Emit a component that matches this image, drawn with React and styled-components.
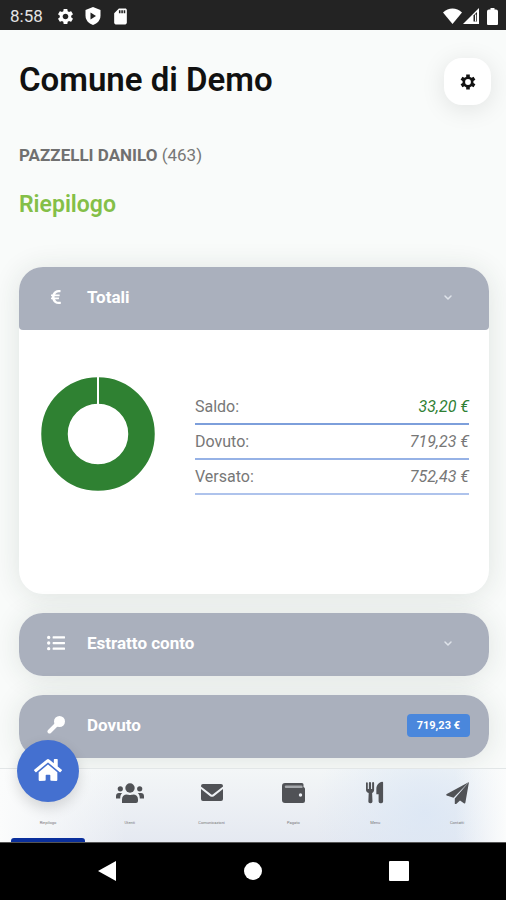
import React from 'react';
import styled, { createGlobalStyle } from 'styled-components';
import {
  FaHome, FaEuroSign, FaListUl,
} from 'react-icons/fa';
import { MdSettings, MdSdCard } from 'react-icons/md';

const GlobalStyle = createGlobalStyle`
  * {
    box-sizing: border-box;
  }

  body {
    margin: 0;
    background: #f9fbfa;
    color: #707070;
    font-family: Roboto, sans-serif;
  }

  button {
    border: 0;
    padding: 0;
    font-family: inherit;
    cursor: pointer;
  }
`;

const Screen = styled.div`
  display: flex;
  flex-direction: column;
  height: 100vh;
  overflow: hidden;
`;

const StatusBar = styled.div`
  display: flex;
  flex: none;
  justify-content: space-between;
  align-items: center;
  height: 30px;
  padding: 2px 8px 0 10px;
  background: #232323;
  color: #fff;
  font-size: 17px;
`;

const StatusGroup = styled.div`
  display: flex;
  align-items: center;
  gap: ${({ $gap }) => $gap}px;
`;

const Clock = styled.span`
  margin-right: 3px;
  color: #e4e4e4;
`;

const Content = styled.main`
  flex: 1;
  min-height: 0;
  overflow: hidden;
  padding: 28px 17px 0 19px;
`;

const Header = styled.header`
  display: flex;
  justify-content: space-between;
  align-items: flex-start;
`;

const Title = styled.h1`
  margin: 0;
  color: #111;
  font-size: 33px;
  font-weight: 600;
  line-height: 44px;
`;

const SettingsButton = styled.button`
  display: flex;
  justify-content: center;
  align-items: center;
  width: 47px;
  height: 47px;
  margin-right: -2px;
  border-radius: 18px;
  background: #fff;
  color: #111;
  box-shadow: 0 4px 25px rgba(0, 0, 0, 0.1);
`;

const UserName = styled.p`
  margin: 40px 0 0;
  color: #777;
  font-size: 17px;
  line-height: 20px;

  strong {
    color: #707070;
    font-weight: 700;
  }
`;

const SectionTitle = styled.h2`
  margin: 24px 0 0;
  color: #84bf48;
  font-size: 23px;
  font-weight: 600;
  line-height: 32px;
`;

const Accordion = styled.div`
  display: flex;
  flex-direction: column;
  gap: 19px;
  margin-top: 46px;
`;

const Card = styled.section`
  border-radius: 24px;
  background: #fff;
  box-shadow: 0 2px 28px rgba(30, 60, 40, 0.12);
`;

const CardHeader = styled.button`
  display: flex;
  align-items: center;
  width: 100%;
  height: 63px;
  padding: 0 ${({ $badge }) => ($badge ? 19 : 35)}px 3px 24px;
  border-radius: ${({ $open }) => ($open ? '24px 24px 4px 4px' : '24px')};
  background: #aab0bd;
  color: #fff;
  font-size: 17px;
  font-weight: 700;
  text-align: left;
`;

const CardIcon = styled.span`
  display: flex;
  justify-content: center;
  width: 26px;
  margin-right: 18px;
`;

const CardLabel = styled.span`
  flex: 1;
`;

const Badge = styled.span`
  padding: 0 10px;
  border-radius: 4px;
  background: #4a87dc;
  font-size: 11px;
  font-weight: 700;
  line-height: 23px;
`;

const CardBody = styled.div`
  display: flex;
  align-items: flex-start;
  gap: 40px;
  height: 264px;
  padding: 47px 20px 0 22px;
`;

const Totals = styled.table`
  flex: 1;
  margin-top: 12px;
  border-collapse: collapse;
  font-size: 16px;

  th {
    padding: 0;
    color: #777;
    font-weight: 400;
    text-align: left;
  }

  td {
    padding: 0;
    font-style: italic;
    text-align: right;
  }
`;

const TotalRow = styled.tr`
  height: 35px;
  border-bottom: 2px solid ${({ $line }) => $line};

  td {
    color: ${({ $positive }) => ($positive ? '#2f8034' : '#777')};
  }
`;

const TabBar = styled.nav`
  display: grid;
  flex: none;
  grid-template-columns: repeat(6, 1fr);
  height: 74px;
  padding: 0 8px 0 7px;
  border-top: 1px solid #e2e6e7;
  background:
    linear-gradient(90deg, #fbfcfc 0%, rgba(251, 252, 252, 0) 25%, rgba(251, 252, 252, 0) 90%, #fbfcfc 100%),
    radial-gradient(circle at 84% 60%, rgba(218, 230, 245, 0.8), rgba(218, 230, 245, 0) 110px),
    linear-gradient(#f3f6f7, #e5e9f1);
`;

const Tab = styled.a`
  display: flex;
  position: relative;
  flex-direction: column;
  align-items: center;
  padding-top: 11px;
  color: #505256;
  text-decoration: none;
`;

const TabIcon = styled.span`
  display: flex;
  justify-content: center;
  align-items: center;
  height: 25px;
`;

const TabLabel = styled.span`
  margin-top: 16px;
  color: #777;
  font-size: 4px;
  line-height: 4px;
`;

const HomeBubble = styled.span`
  display: flex;
  position: absolute;
  top: -29px;
  justify-content: center;
  align-items: center;
  width: 62px;
  height: 62px;
  padding-bottom: 3px;
  border-radius: 50%;
  background: #4470d0;
  color: #fff;
  box-shadow: 0 6px 14px rgba(0, 0, 0, 0.14);
`;

const ActiveLine = styled.span`
  position: absolute;
  right: 4px;
  bottom: 0;
  left: 4px;
  height: 4px;
  border-radius: 3px 3px 0 0;
  background: #0a2f9c;
`;

const SystemBar = styled.div`
  display: grid;
  flex: none;
  grid-template-columns: repeat(3, 146px);
  justify-content: center;
  height: 58px;
  border-top: 1px solid #555;
  background: #000;
`;

const SystemButton = styled.button`
  display: flex;
  justify-content: center;
  align-items: center;
  padding-bottom: 1px;
  background: none;
`;

function ShieldIcon() {
  return (
    <svg width="16" height="18" viewBox="0 0 16 18">
      <path d="M8 0l7.500 3v5.500c0 4.500-3 8-7.500 9.500C3.500 16.500.5 13 .5 8.500V3z" fill="#fff" />
      <path d="M5.500 5.500v7L11 9z" fill="#232323" />
    </svg>
  );
}

function WifiIcon() {
  return (
    <svg width="19" height="16" viewBox="0 0 19 16">
      <path d="M0 4.500C5.500-1 13.500-1 19 4.500L9.500 16z" fill="#fff" />
    </svg>
  );
}

function SignalIcon() {
  return (
    <svg width="16" height="16" viewBox="0 0 16 16">
      <path d="M0 16L16 0v16z" fill="#fff" />
      <path d="M10.500 7.500L14 4v9.500h-3.500z" fill="#232323" />
      <path d="M12 6.500h1.200v7H12z" fill="#fff" />
    </svg>
  );
}

function BatteryIcon() {
  return (
    <svg width="11" height="17" viewBox="0 0 11 17">
      <path d="M3.500 0h4v1.500H9a2 2 0 012 2V16a1 1 0 01-1 1H1a1 1 0 01-1-1V3.500a2 2 0 012-2h1.500z" fill="#fff" />
    </svg>
  );
}

function GearIcon() {
  return (
    <svg width="16" height="16" viewBox="0 0 16 16" fill="none" stroke="currentColor">
      <circle cx="8" cy="8" r="4.200" strokeWidth="2.600" />
      {[0, 60, 120].map((angle) => (
        <path
          key={angle}
          d="M8 .5v2.800M8 12.700v2.800"
          strokeWidth="3.600"
          transform={`rotate(${angle} 8 8)`}
        />
      ))}
    </svg>
  );
}

function KeyIcon() {
  return (
    <svg width="18" height="18" viewBox="0 0 18 18">
      <circle cx="12.500" cy="5.500" r="5.500" fill="#fff" />
      <path d="M9 9l-6.500 6.500" stroke="#fff" strokeWidth="4" strokeLinecap="round" />
    </svg>
  );
}

function ChevronIcon() {
  return (
    <svg width="12" height="12" viewBox="0 0 12 12" fill="none" stroke="#dfe3ea" strokeWidth="1.500">
      <path d="M3 5l3 3 3-3" strokeLinecap="round" strokeLinejoin="round" />
    </svg>
  );
}

function PeopleIcon() {
  return (
    <svg width="28" height="20" viewBox="0 0 28 20" fill="currentColor">
      <circle cx="14" cy="5" r="4.700" />
      <path d="M6 20v-3.500c0-3.200 2-5 5-5 1.200.6 4.800.6 6 0 3 0 5 1.800 5 5V18a2 2 0 01-2 2z" />
      <circle cx="4.300" cy="5.800" r="2.600" />
      <circle cx="23.700" cy="5.800" r="2.600" />
      <path d="M0 15.500v-2.200C0 11 1.200 10 3 10h3.200c-1.400 1.400-2 3-2 5.500z" />
      <path d="M28 15.500v-2.200c0-2.300-1.200-3.300-3-3.300h-3.200c1.400 1.400 2 3 2 5.500z" />
    </svg>
  );
}

function EnvelopeIcon() {
  return (
    <svg width="22" height="17" viewBox="0 0 22 17" fill="currentColor">
      <path d="M0 2.500V2a2 2 0 012-2h18a2 2 0 012 2v.5l-9.700 7.600a2 2 0 01-2.600 0z" />
      <path d="M0 5l8.800 6.900a3.500 3.500 0 004.400 0L22 5v10a2 2 0 01-2 2H2a2 2 0 01-2-2z" />
    </svg>
  );
}

function WalletIcon() {
  return (
    <svg width="23" height="20" viewBox="0 0 23 20">
      <path d="M3 0h17a1.500 1.500 0 011.500 1.500V4A2 2 0 0123 6v12a2 2 0 01-2 2H3a3 3 0 01-3-3V3a3 3 0 013-3z" fill="currentColor" />
      <path d="M4 2.500h15.500a1 1 0 011 1V5H4a1.200 1.200 0 010-2.500z" fill="#a5a8ac" />
      <circle cx="18.500" cy="12" r="1.700" fill="#eceff4" />
    </svg>
  );
}

function CutleryIcon() {
  return (
    <svg width="18" height="23" viewBox="0 0 20 24" fill="currentColor">
      <path d="M0 1.500a1 1 0 012 0V8h1.200V1.500a1.200 1.200 0 012.400 0V8h1.200V1.500a1 1 0 012.200 0V9c0 1.800-.8 3-2.200 3.600L7.200 22a2 2 0 01-2 2H4.600a2 2 0 01-2-2L3 12.600C1 12 0 10.800 0 9z" />
      <path d="M19 1v21a2 2 0 01-2 2h-1a2 2 0 01-2-2v-8h-2.500V8C11.500 3.500 14.500.500 18 0a1 1 0 011 1z" />
    </svg>
  );
}

function PlaneIcon() {
  return (
    <svg width="23" height="22" viewBox="0 0 23 22" fill="currentColor">
      <path d="M23 0L7.500 15.800.8 13.600a1 1 0 010-1.700z" />
      <path d="M23 0l-3.600 20.500a1 1 0 01-1.500.7L14 18.500 10.200 22a.8.800 0 01-1.400-.6v-4.800z" />
    </svg>
  );
}

function Donut() {
  return (
    <svg width="114" height="114" viewBox="0 0 114 114" role="img" aria-label="Totali">
      <circle cx="57" cy="57" r="43.500" fill="none" stroke="#2f8132" strokeWidth="26.500" />
      <path d="M57 0v28" stroke="#fff" strokeWidth="2" />
    </svg>
  );
}

const totals = [
  { label: 'Saldo:', value: '33,20 €', line: '#7d9fdb', positive: true },
  { label: 'Dovuto:', value: '719,23 €', line: '#96b2e6' },
  { label: 'Versato:', value: '752,43 €', line: '#aec3ec' },
];

const tabs = [
  { label: 'Utenti', icon: <PeopleIcon /> },
  { label: 'Comunicazioni', icon: <EnvelopeIcon /> },
  { label: 'Pagato', icon: <WalletIcon /> },
  { label: 'Menu', icon: <CutleryIcon /> },
  { label: 'Contatti', icon: <PlaneIcon /> },
];

function AccordionCard({
  icon, label, badge, children,
}) {
  const open = Boolean(children);
  return (
    <Card>
      <CardHeader type="button" aria-expanded={open} $open={open} $badge={badge}>
        <CardIcon>{icon}</CardIcon>
        <CardLabel>{label}</CardLabel>
        {badge ? <Badge>{badge}</Badge> : <ChevronIcon />}
      </CardHeader>
      {children}
    </Card>
  );
}

export default function App() {
  return (
    <Screen>
      <GlobalStyle />
      <StatusBar>
        <StatusGroup $gap={10}>
          <Clock>8:58</Clock>
          <MdSettings size={19} />
          <ShieldIcon />
          <MdSdCard size={19} />
        </StatusGroup>
        <StatusGroup $gap={8}>
          <StatusGroup $gap={1}>
            <WifiIcon />
            <SignalIcon />
          </StatusGroup>
          <BatteryIcon />
        </StatusGroup>
      </StatusBar>
      <Content>
        <Header>
          <Title>Comune di Demo</Title>
          <SettingsButton type="button" aria-label="Impostazioni">
            <GearIcon />
          </SettingsButton>
        </Header>
        <UserName>
          <strong>PAZZELLI DANILO</strong>
          {' (463)'}
        </UserName>
        <SectionTitle>Riepilogo</SectionTitle>
        <Accordion>
          <AccordionCard icon={<FaEuroSign size={16} />} label="Totali">
            <CardBody>
              <Donut />
              <Totals>
                <tbody>
                  {totals.map((row) => (
                    <TotalRow key={row.label} $line={row.line} $positive={row.positive}>
                      <th scope="row">{row.label}</th>
                      <td>{row.value}</td>
                    </TotalRow>
                  ))}
                </tbody>
              </Totals>
            </CardBody>
          </AccordionCard>
          <AccordionCard icon={<FaListUl size={18} />} label="Estratto conto" />
          <AccordionCard icon={<KeyIcon />} label="Dovuto" badge="719,23 €" />
        </Accordion>
      </Content>
      <TabBar>
        <Tab href="#riepilogo" aria-current="page">
          <HomeBubble>
            <FaHome size={28} />
          </HomeBubble>
          <TabIcon />
          <TabLabel>Riepilogo</TabLabel>
          <ActiveLine />
        </Tab>
        {tabs.map((tab) => (
          <Tab key={tab.label} href={`#${tab.label.toLowerCase()}`}>
            <TabIcon>{tab.icon}</TabIcon>
            <TabLabel>{tab.label}</TabLabel>
          </Tab>
        ))}
      </TabBar>
      <SystemBar>
        <SystemButton type="button" aria-label="Indietro">
          <svg width="18" height="20" viewBox="0 0 18 20"><path d="M18 0v20L0 10z" fill="#fff" /></svg>
        </SystemButton>
        <SystemButton type="button" aria-label="Home">
          <svg width="18" height="18" viewBox="0 0 18 18"><circle cx="9" cy="9" r="9" fill="#fff" /></svg>
        </SystemButton>
        <SystemButton type="button" aria-label="Recenti">
          <svg width="20" height="20" viewBox="0 0 20 20"><rect width="20" height="20" rx="1" fill="#fff" /></svg>
        </SystemButton>
      </SystemBar>
    </Screen>
  );
}
